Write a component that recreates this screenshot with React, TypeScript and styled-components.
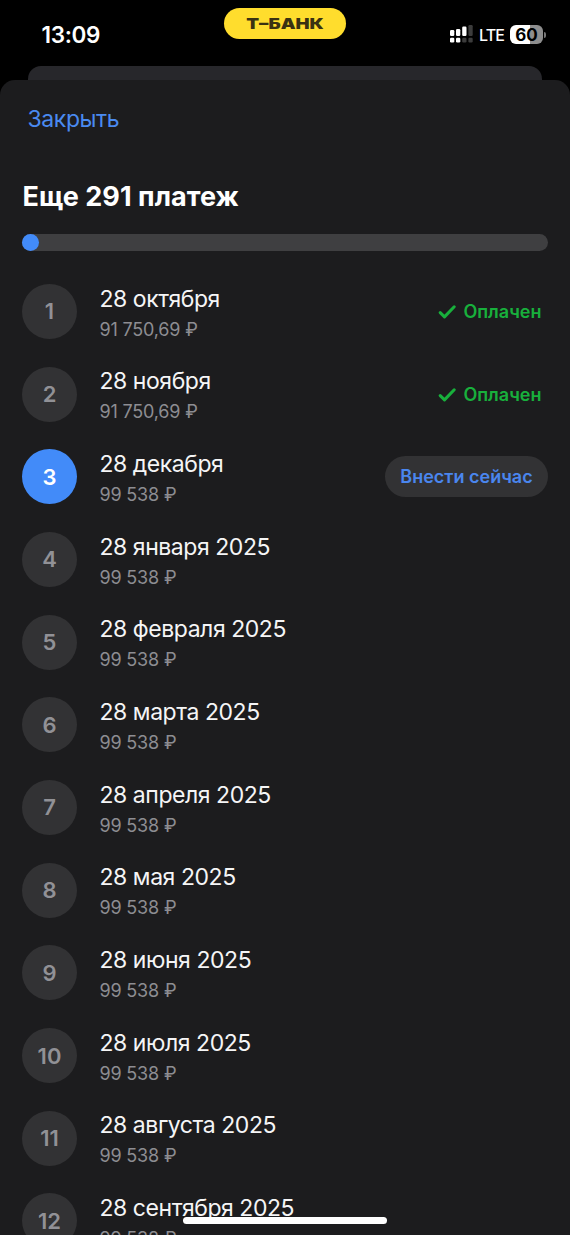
import React from 'react';
import styled, { createGlobalStyle } from 'styled-components';

const Global = createGlobalStyle`
  * { box-sizing: border-box; }
  html, body { margin: 0; background: #000; overflow: hidden; }
  body { font-family: Inter, "Liberation Sans", sans-serif; color: #fff; }
`;

const Screen = styled.div`
  position: relative;
  width: 570px;
  height: 1235px;
  overflow: hidden;
  display: flex;
  flex-direction: column;
  background: #000;
`;

const StatusBar = styled.header`
  height: 66px;
  flex: none;
  display: grid;
  grid-template-columns: 1fr 122px 1fr;
  padding: 8px 24px 0;
`;

const Clock = styled.time`
  padding: 13px 0 0 17.5px;
  font-size: 22.5px;
  line-height: 28px;
  font-weight: 600;
  letter-spacing: -0.35px;
`;

const BankPill = styled.div`
  height: 31px;
  border-radius: 16px;
  background: #ffdd2d;
  color: #3a3212;
  display: flex;
  align-items: center;
  justify-content: center;
`;

const BankName = styled.span`
  font-size: 15px;
  line-height: 20px;
  font-weight: 900;
  transform: scaleX(1.25);
  white-space: nowrap;
`;

const Indicators = styled.div`
  display: flex;
  justify-content: flex-end;
  align-items: flex-start;
  padding-top: 17px;
`;

const Network = styled.span`
  margin: 0 6px 0 6px;
  font-size: 16px;
  line-height: 20px;
  font-weight: 500;
  letter-spacing: -0.9px;
`;

const Battery = styled.div`
  width: 33px;
  height: 19px;
  border-radius: 6px;
  background: linear-gradient(90deg, #fff 60%, #8e8e8e 60%);
  color: #000;
  font-size: 17px;
  line-height: 20px;
  font-weight: 700;
  text-align: center;
`;

const BatteryTip = styled.i`
  width: 2px;
  height: 6px;
  margin: 7px 0 0 1px;
  border-radius: 0 2px 2px 0;
  background: #777;
`;

const BackCard = styled.div`
  flex: none;
  height: 14px;
  margin: 0 28px;
  border-radius: 13px 13px 0 0;
  background: #27272b;
`;

const Sheet = styled.main`
  flex: 1;
  min-height: 0;
  border-radius: 15px 15px 0 0;
  background: #1c1c1e;
  padding: 24px 22px 0;
  overflow: hidden;
`;

const CloseButton = styled.button`
  display: block;
  margin: 0 0 0 5.5px;
  padding: 0;
  border: 0;
  background: none;
  color: #4a8af0;
  font: 400 23px/30px Inter, "Liberation Sans", sans-serif;
  letter-spacing: -0.4px;
`;

const Title = styled.h1`
  margin: 45px 0 0 0.5px;
  font-size: 27px;
  line-height: 36px;
  font-weight: 700;
  letter-spacing: 0.05px;
  white-space: nowrap;
`;

const Track = styled.div`
  height: 17px;
  margin-top: 19px;
  border-radius: 9px;
  background: #3f3f41;
`;

const Progress = styled.div`
  width: 17px;
  height: 17px;
  border-radius: 50%;
  background: #428bf9;
`;

const List = styled.ol`
  list-style: none;
  margin: 19px 0 0;
  padding: 0;
`;

const Row = styled.li`
  height: 82.7px;
  display: flex;
  align-items: center;
`;

const Badge = styled.span<{ $active: boolean }>`
  width: 55px;
  height: 55px;
  flex: none;
  border-radius: 50%;
  display: flex;
  align-items: center;
  justify-content: center;
  font-size: 22px;
  font-weight: 600;
  background: ${p => (p.$active ? '#428bf9' : '#323234')};
  color: ${p => (p.$active ? '#fff' : '#919196')};
`;

const Details = styled.div`
  flex: 1;
  margin-left: 22.5px;
  padding-top: 3.4px;
  white-space: nowrap;
`;

const PayDate = styled.div`
  font-size: 23px;
  line-height: 30px;
  letter-spacing: -0.45px;
  color: #f5f5f6;
`;

const Amount = styled.div`
  margin-top: 3px;
  font-size: 18px;
  line-height: 26px;
  letter-spacing: -0.18px;
  color: #8d8d92;
`;

const Paid = styled.span`
  display: flex;
  align-items: center;
  gap: 7.5px;
  margin-right: 6.5px;
  color: #18b03c;
  font-size: 18px;
  font-weight: 600;
`;

const PayButton = styled.button`
  width: 163px;
  height: 41px;
  padding: 0;
  border: 0;
  border-radius: 21px;
  background: #323234;
  color: #4a86ee;
  font: 600 18px/24px Inter, "Liberation Sans", sans-serif;
  white-space: nowrap;
`;

const HomeIndicator = styled.div`
  position: absolute;
  left: 183px;
  bottom: 11px;
  width: 204px;
  height: 7px;
  border-radius: 4px;
  background: #fff;
`;

const Signal = () => (
  <svg width="23" height="18" viewBox="0 0 23 18" fill="#fff">
    <rect x="0" y="5" width="4.3" height="6" rx="1.2" />
    <rect x="6" y="4" width="4.3" height="7" rx="1.2" />
    <rect x="12.2" y="1.5" width="4.3" height="9.5" rx="1.2" />
    <rect x="18.4" y="0" width="4.3" height="11" rx="1.2" fill="#3c3c3c" />
    <rect x="0" y="12.8" width="4.3" height="4.7" rx="1.2" />
    <rect x="6" y="12.8" width="4.3" height="4.7" rx="1.2" />
    <rect x="12.2" y="12.8" width="4.3" height="4.7" rx="1.2" fill="#3c3c3c" />
    <rect x="18.4" y="12.8" width="4.3" height="4.7" rx="1.2" fill="#3c3c3c" />
  </svg>
);

const Check = () => (
  <svg width="18" height="16" viewBox="0 0 18 16" fill="none" stroke="currentColor" strokeWidth="3" strokeLinecap="round" strokeLinejoin="round">
    <path d="M2.2 9.6 6.5 13.9 16.2 3.8" />
  </svg>
);

type Payment = { date: string; amount: string; state?: 'paid' | 'current' };

const payments: Payment[] = [
  { date: '28 октября', amount: '91 750,69 ₽', state: 'paid' },
  { date: '28 ноября', amount: '91 750,69 ₽', state: 'paid' },
  { date: '28 декабря', amount: '99 538 ₽', state: 'current' },
  ...['января', 'февраля', 'марта', 'апреля', 'мая', 'июня', 'июля', 'августа', 'сентября'].map(m => ({
    date: `28 ${m} 2025`,
    amount: '99 538 ₽',
  })),
];

export default function App() {
  return (
    <Screen>
      <Global />
      <StatusBar>
        <Clock>13:09</Clock>
        <BankPill><BankName>Т–БАНК</BankName></BankPill>
        <Indicators>
          <Signal />
          <Network>LTE</Network>
          <Battery>60</Battery>
          <BatteryTip />
        </Indicators>
      </StatusBar>
      <BackCard />
      <Sheet>
        <CloseButton>Закрыть</CloseButton>
        <Title>Еще 291 платеж</Title>
        <Track><Progress /></Track>
        <List>
          {payments.map((p, i) => (
            <Row key={p.date}>
              <Badge $active={p.state === 'current'}>{i + 1}</Badge>
              <Details>
                <PayDate>{p.date}</PayDate>
                <Amount>{p.amount}</Amount>
              </Details>
              {p.state === 'paid' && <Paid><Check />Оплачен</Paid>}
              {p.state === 'current' && <PayButton>Внести сейчас</PayButton>}
            </Row>
          ))}
        </List>
      </Sheet>
      <HomeIndicator />
    </Screen>
  );
}
